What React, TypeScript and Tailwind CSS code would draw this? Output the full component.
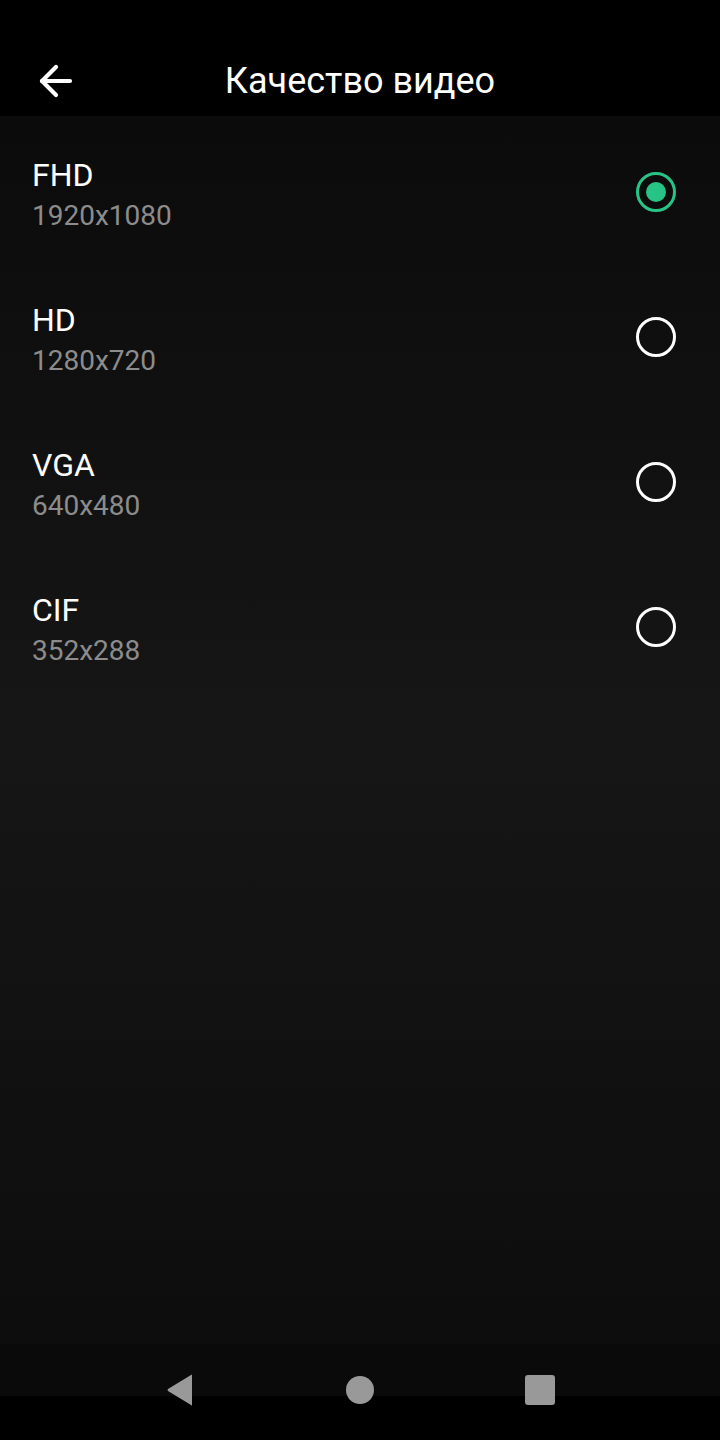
import { ArrowLeft } from "lucide-react"

interface Option {
  name: string;
  size: string;
}

const options: Option[] = [
  { name: "FHD", size: "1920x1080" },
  { name: "HD", size: "1280x720" },
  { name: "VGA", size: "640x480" },
  { name: "CIF", size: "352x288" },
];

function Radio({ checked }: { checked: boolean }) {
  if (checked) {
    return (
      <div className="w-[40px] h-[40px] mb-[6px] rounded-full border-[3px] border-[#27c485] flex items-center justify-center">
        <div className="w-[20px] h-[20px] rounded-full bg-[#27c485]" />
      </div>
    );
  }
  return <div className="w-[40px] h-[40px] mb-[6px] rounded-full border-[3px] border-white" />;
}

function OptionRow({ name, size, checked }: Option & { checked: boolean }) {
  return (
    <div className="flex items-center justify-between h-[145px] pl-[32px] pr-[44px]">
      <div className="flex flex-col">
        <span className="text-[32px] leading-[38px] text-white">{name}</span>
        <span className="text-[28px] leading-[34px] text-[#8c8c8c] mt-[5px]">{size}</span>
      </div>
      <Radio checked={checked} />
    </div>
  );
}

export default function App() {
  return (
    <div
      className="w-[720px] h-[1440px] flex flex-col bg-black"
      style={{ fontFamily: "Roboto, 'Noto Sans', sans-serif" }}
    >
      <div className="h-[116px] shrink-0 flex items-end pb-[13px] bg-black">
        <div className="w-full flex items-center justify-center relative h-[44px]">
          <ArrowLeft
            className="absolute left-[32px] text-white"
            size={48}
            strokeWidth={2.1}
          />
          <span className="text-[36px] text-white">Качество видео</span>
        </div>
      </div>
      <div className="flex-1 flex flex-col pt-[6px] bg-linear-to-b from-[#0b0b0b] via-[#161616] to-[#0d0d0d]">
        {options.map((o, i) => (
          <OptionRow key={o.name} {...o} checked={i === 0} />
        ))}
      </div>
      <div className="h-[52px] shrink-0 bg-[#0a0a0a] flex items-end justify-center pb-0">
        <div className="flex items-center translate-y-[11px]">
          <div className="w-[180px] flex justify-center">
            <svg width="30" height="34" viewBox="0 0 30 34">
              <path d="M27 2 L27 32 Q27 33 26 32 L3 18 Q2 17 3 16 L26 2 Q27 1 27 2 Z" fill="#999999" />
            </svg>
          </div>
          <div className="w-[180px] flex justify-center">
            <div className="w-[28px] h-[28px] rounded-full bg-[#999999]" />
          </div>
          <div className="w-[180px] flex justify-center">
            <div className="w-[30px] h-[30px] rounded-[3px] bg-[#999999]" />
          </div>
        </div>
      </div>
      <div className="h-[44px] shrink-0 bg-black" />
    </div>
  );
}
